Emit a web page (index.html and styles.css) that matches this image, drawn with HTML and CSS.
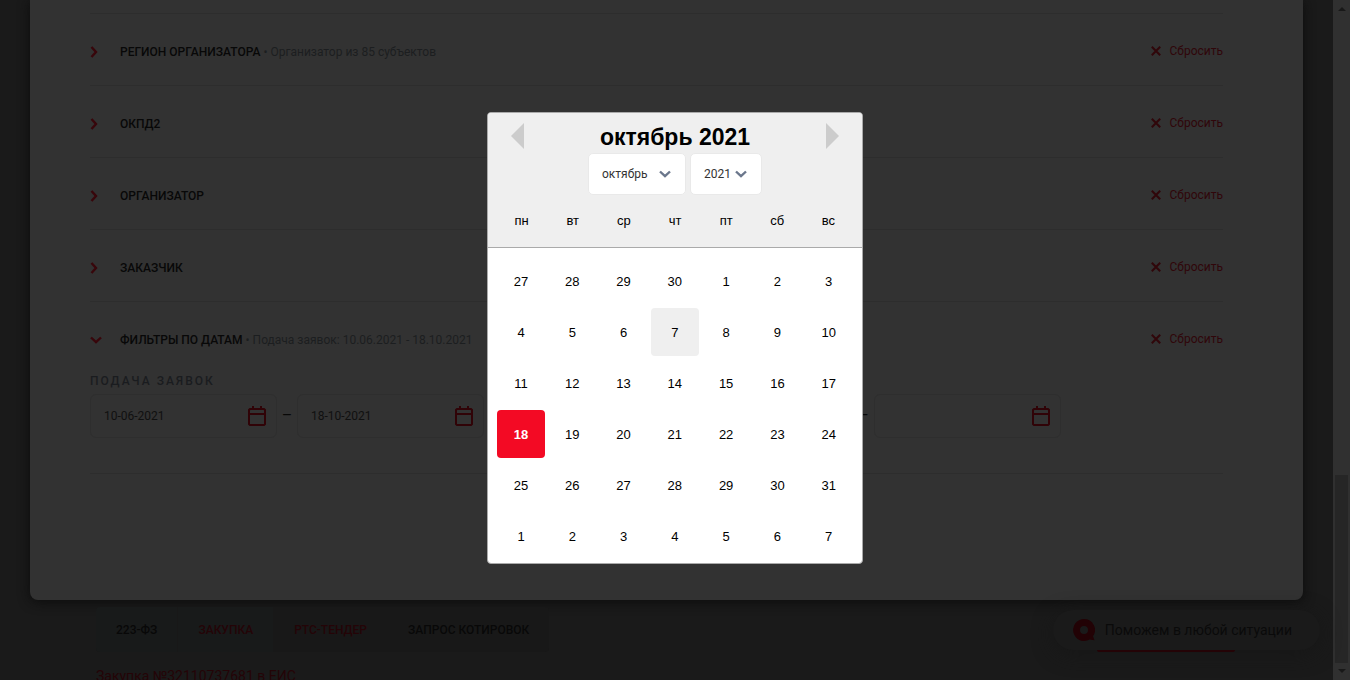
FILE: index.html
```html
<!DOCTYPE html>
<html lang="ru">
<head>
<meta charset="utf-8">
<meta name="viewport" content="width=device-width, initial-scale=1">
<title>Фильтры по датам</title>
<link rel="stylesheet" href="styles.css">
</head>
<body>
<svg class="sprite" aria-hidden="true">
  <symbol id="chevron" viewBox="0 0 8 12"><path d="M1.5 1 6 6l-4.500 5" fill="none" stroke="currentColor" stroke-width="2.400"/></symbol>
  <symbol id="chevron-down" viewBox="0 0 12 8"><path d="M1 1.500 6 6.200 11 1.500" fill="none" stroke="currentColor" stroke-width="2.400"/></symbol>
  <symbol id="cross" viewBox="0 0 10 10"><path d="M.8.800 9.200 9.200M9.200.800.800 9.200" fill="none" stroke="currentColor" stroke-width="2"/></symbol>
  <symbol id="calendar" viewBox="0 0 18 20"><path d="M2 3h14l1 1v14l-1 1H2l-1-1V4zM1 8h16M5 0v3M13 0v3" fill="none" stroke="currentColor" stroke-width="2"/></symbol>
</svg>
<div class="page">
  <main class="content">
    <section class="panel">
      <div class="filter">
        <button class="filter-toggle" type="button"><svg class="chevron"><use href="#chevron"/></svg><span><b>Регион организатора</b> <span class="note">• Организатор из 85 субъектов</span></span></button>
        <button class="reset" type="button"><svg class="cross"><use href="#cross"/></svg>Сбросить</button>
      </div>
      <div class="filter">
        <button class="filter-toggle" type="button"><svg class="chevron"><use href="#chevron"/></svg><b>ОКПД2</b></button>
        <button class="reset" type="button"><svg class="cross"><use href="#cross"/></svg>Сбросить</button>
      </div>
      <div class="filter">
        <button class="filter-toggle" type="button"><svg class="chevron"><use href="#chevron"/></svg><b>Организатор</b></button>
        <button class="reset" type="button"><svg class="cross"><use href="#cross"/></svg>Сбросить</button>
      </div>
      <div class="filter">
        <button class="filter-toggle" type="button"><svg class="chevron"><use href="#chevron"/></svg><b>Заказчик</b></button>
        <button class="reset" type="button"><svg class="cross"><use href="#cross"/></svg>Сбросить</button>
      </div>
      <div class="filter">
        <button class="filter-toggle" type="button"><svg class="chevron-down"><use href="#chevron-down"/></svg><span><b>Фильтры по датам</b> <span class="note">• Подача заявок: 10.06.2021 - 18.10.2021</span></span></button>
        <button class="reset" type="button"><svg class="cross"><use href="#cross"/></svg>Сбросить</button>
      </div>
      <div class="dates">
        <div class="range">
          <label class="range-title" for="from">Подача заявок</label>
          <div class="range-fields">
            <div class="field"><input id="from" type="text" value="10-06-2021"><svg class="calendar-icon"><use href="#calendar"/></svg></div>
            <span>–</span>
            <div class="field"><input type="text" value="18-10-2021" aria-label="Подача заявок до"><svg class="calendar-icon"><use href="#calendar"/></svg></div>
          </div>
        </div>
        <div class="range">
          <div class="range-fields">
            <div class="field"><input type="text" aria-label="Дата от"><svg class="calendar-icon"><use href="#calendar"/></svg></div>
            <span>–</span>
            <div class="field"><input type="text" aria-label="Дата до"><svg class="calendar-icon"><use href="#calendar"/></svg></div>
          </div>
        </div>
      </div>
    </section>
    <section class="result">
      <div class="tags">
        <span class="tag tag-law">223-ФЗ</span>
        <a class="tag tag-law" href="#">ЗАКУПКА</a>
        <a class="tag" href="#">РТС-ТЕНДЕР</a>
        <span class="tag">ЗАПРОС КОТИРОВОК</span>
      </div>
      <a class="purchase" href="#">Закупка №32110737681 в ЕИС</a>
    </section>
    <button class="chat" type="button">
      <svg class="chat-icon" viewBox="0 0 22 22"><path fill="currentColor" fill-rule="evenodd" d="M11 0a11 11 0 0 1 9 17.300l1.500 4-5-.700A11 11 0 1 1 11 0Zm0 7a4 4 0 1 0 0 8 4 4 0 0 0 0-8Z"/></svg>
      Поможем в любой ситуации
    </button>
  </main>
  <div class="scrollbar" aria-hidden="true">
    <svg class="scroll-arrow scroll-up" viewBox="0 0 8 4"><path d="M4 0l4 4H0z"/></svg>
    <div class="thumb"></div>
    <svg class="scroll-arrow" viewBox="0 0 8 4"><path d="M0 0h8L4 4z"/></svg>
  </div>
</div>

<div class="overlay">
  <div class="picker" role="dialog" aria-labelledby="month-title">
    <header class="picker-head">
      <div class="month-bar">
        <button class="arrow" type="button" aria-label="Предыдущий месяц"><svg viewBox="0 0 13 26"><path d="M13 0v26L0 13z"/></svg></button>
        <h2 id="month-title">октябрь 2021</h2>
        <button class="arrow" type="button" aria-label="Следующий месяц"><svg viewBox="0 0 13 26"><path d="M0 0v26l13-13z"/></svg></button>
      </div>
      <div class="selects">
        <div class="select"><select class="month" aria-label="Месяц"><option>октябрь</option></select><svg class="chevron-down"><use href="#chevron-down"/></svg></div>
        <div class="select"><select class="year" aria-label="Год"><option>2021</option></select><svg class="chevron-down"><use href="#chevron-down"/></svg></div>
      </div>
      <div class="weekdays"><span>пн</span><span>вт</span><span>ср</span><span>чт</span><span>пт</span><span>сб</span><span>вс</span></div>
    </header>
    <div class="picker-body">
      <table class="days">
        <tr><td><button>27</button></td><td><button>28</button></td><td><button>29</button></td><td><button>30</button></td><td><button>1</button></td><td><button>2</button></td><td><button>3</button></td></tr>
        <tr><td><button>4</button></td><td><button>5</button></td><td><button>6</button></td><td><button class="hovered">7</button></td><td><button>8</button></td><td><button>9</button></td><td><button>10</button></td></tr>
        <tr><td><button>11</button></td><td><button>12</button></td><td><button>13</button></td><td><button>14</button></td><td><button>15</button></td><td><button>16</button></td><td><button>17</button></td></tr>
        <tr><td><button class="selected">18</button></td><td><button>19</button></td><td><button>20</button></td><td><button>21</button></td><td><button>22</button></td><td><button>23</button></td><td><button>24</button></td></tr>
        <tr><td><button>25</button></td><td><button>26</button></td><td><button>27</button></td><td><button>28</button></td><td><button>29</button></td><td><button>30</button></td><td><button>31</button></td></tr>
        <tr><td><button>1</button></td><td><button>2</button></td><td><button>3</button></td><td><button>4</button></td><td><button>5</button></td><td><button>6</button></td><td><button>7</button></td></tr>
      </table>
    </div>
  </div>
</div>
</body>
</html>
```
FILE: styles.css
```css
* { box-sizing: border-box; }

body {
  margin: 0;
  background: #1a1a1a;
  color: #080808;
  font: 12px/16px Roboto, sans-serif;
}

button, input, select {
  margin: 0;
  padding: 0;
  border: 0;
  background: none;
  color: inherit;
  font: inherit;
}

a { color: #240407; text-decoration: none; }
svg { display: block; flex: none; }
.sprite { position: absolute; width: 0; height: 0; }

.page { display: flex; height: 100vh; overflow: hidden; }
.content { flex: 1; min-width: 0; }

.panel {
  margin: 0 30px;
  padding: 13px 80px 126px 60px;
  border-radius: 0 0 8px 8px;
  background: #323232;
  box-shadow: 0 2px 12px #0c0c0c;
}

.filter {
  display: flex;
  align-items: center;
  justify-content: space-between;
  height: 72px;
  padding-top: 4px;
  border-top: 1px solid #2d2d2d;
}
.filter-toggle { display: grid; grid-template-columns: 30px auto; align-items: center; text-align: left; }
.filter-toggle b { font-weight: 500; text-transform: uppercase; }
.note { color: #1c1e20; }
.chevron { width: 8px; height: 12px; color: #38060b; }
.chevron-down { width: 12px; height: 8px; color: #38060b; }
.reset { display: flex; align-items: center; gap: 9px; padding-bottom: 2px; color: #30060a; }
.cross { width: 10px; height: 10px; }

.dates {
  display: grid;
  grid-template-columns: 1fr 1fr;
  align-items: end;
  gap: 20px;
  padding-bottom: 35px;
  border-bottom: 1px solid #2d2d2d;
}
.range-title {
  display: block;
  margin-bottom: 5px;
  color: #1a1c1f;
  font-weight: 500;
  letter-spacing: 2px;
  text-transform: uppercase;
}
.range-fields { display: flex; align-items: center; }
.range-fields > span { width: 20px; text-align: center; font-size: 16px; }
.field {
  display: flex;
  align-items: center;
  width: 187px;
  height: 44px;
  padding: 0 10px 0 13px;
  border: 1px solid #2e2e2e;
  border-radius: 6px;
}
.field input { flex: 1; min-width: 0; height: 100%; color: #101010; }
.calendar-icon { width: 18px; height: 20px; color: #300307; }

.result { margin: 7px 68px 0; padding: 0 28px; }
.tags {
  display: flex;
  gap: 1px;
  width: fit-content;
  border-radius: 4px;
  overflow: hidden;
  background: #181818;
  font-weight: 500;
}
.tag { padding: 15px 20px 14px; }
.tag-law { background: #181a1a; }
.purchase { display: block; margin-top: 14px; font-size: 14px; line-height: 20px; }

.chat {
  position: absolute;
  right: 30px;
  bottom: 30px;
  display: flex;
  align-items: center;
  gap: 10px;
  height: 40px;
  padding: 0 28px 0 20px;
  border-radius: 20px;
  color: #0a0a0a;
  font-size: 14px;
  background: #1a1a1a;
  box-shadow: 0 4px 20px #171717;
}
.chat::after {
  content: "";
  position: absolute;
  top: 100%;
  left: 44px;
  width: 138px;
  height: 2px;
  border-radius: 0 0 4px 4px;
  background: #240306;
}
.chat-icon { width: 22px; height: 22px; color: #220205; }

.scrollbar {
  display: flex;
  flex-direction: column;
  align-items: center;
  width: 17px;
  padding: 7px 2px;
  background: #303030;
}
.scroll-arrow { width: 8px; height: 4px; fill: #181818; }
.scroll-up { margin-bottom: auto; }
.thumb { align-self: stretch; height: 27.7vh; margin-bottom: 6px; background: #262626; }

.overlay {
  position: fixed;
  inset: 0;
  display: flex;
  align-items: center;
  justify-content: center;
  padding-bottom: 4px;
}
.picker {
  width: 376px;
  border: 1px solid #aaa;
  border-radius: 4px;
  background: #fff;
  color: #000;
  overflow: hidden;
}
.picker-head { background: #efefef; border-bottom: 1px solid #aaa; }
.month-bar { display: flex; justify-content: space-between; padding: 10px 23px 0; height: 40px; }
.month-bar h2 { margin: 0; font: bold 23px/29px "Liberation Sans", Arial, sans-serif; }
.arrow { height: 26px; }
.arrow svg { width: 13px; height: 26px; fill: #ccc; }

.selects { display: flex; justify-content: center; gap: 4px; }
.select { display: grid; align-items: center; color: #333; }
.select > * { grid-area: 1 / 1; }
.select select {
  height: 42px;
  padding: 0 13px;
  border: 1px solid #e9e9e9;
  border-radius: 5px;
  background: #fff;
  appearance: none;
}
.select svg { justify-self: end; margin-right: 15px; color: #6b778c; pointer-events: none; }
.month { width: 98px; }
.year { width: 72px; }

.weekdays {
  display: grid;
  grid-template-columns: repeat(7, 1fr);
  padding: 18px 8px;
  text-align: center;
  font: 13px/16px "Liberation Sans", Arial, sans-serif;
}
.picker-body { padding: 6px 6px 0; }
.days { width: 100%; table-layout: fixed; border-spacing: 3px; }
.days td { padding: 0; }
.days button { display: block; width: 48px; height: 48px; border-radius: 4px; font: 13px "Liberation Sans", Arial, sans-serif; }
.days .hovered { background: #efefef; }
.days .selected { background: #f30a24; color: #fff; font-weight: 700; }
```
